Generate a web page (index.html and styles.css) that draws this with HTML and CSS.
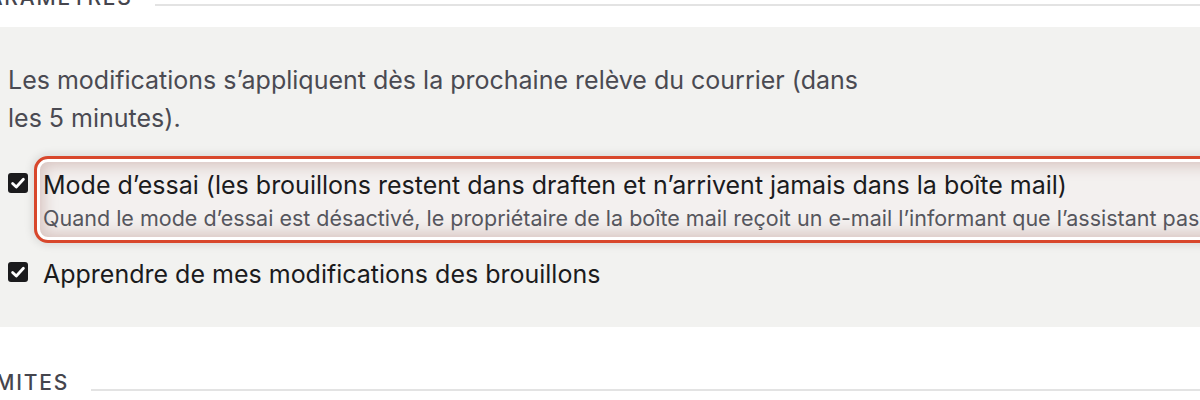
FILE: index.html
```html
<!DOCTYPE html>
<html lang="fr">
<head>
<meta charset="utf-8">
<title>Paramètres</title>
<link rel="stylesheet" href="styles.css">
</head>
<body>
<div class="page">
  <div class="section-head head-top">
    <h2>Paramètres</h2>
    <span class="rule"></span>
  </div>
  <div class="panel">
    <p class="intro">Les modifications s’appliquent dès la prochaine relève du courrier (dans les 5 minutes).</p>
    <div class="option">
      <span class="check"><svg viewBox="0 0 20 20" width="20" height="20"><rect x="0" y="0" width="20" height="20" rx="3" fill="#1b1b1d"/><path d="M4.6 10.4 L8.3 14 L15.4 6.2" fill="none" stroke="#fff" stroke-width="2.8" stroke-linecap="round" stroke-linejoin="round"/></svg></span>
      <div class="opt-text highlight">
        <div class="opt-label">Mode d’essai (les brouillons restent dans draften et n’arrivent jamais dans la boîte mail)</div>
        <div class="opt-desc">Quand le mode d’essai est désactivé, le propriétaire de la boîte mail reçoit un e-mail l’informant que l’assistant passe en mode actif.</div>
      </div>
    </div>
    <div class="option">
      <span class="check"><svg viewBox="0 0 20 20" width="20" height="20"><rect x="0" y="0" width="20" height="20" rx="3" fill="#1b1b1d"/><path d="M4.6 10.4 L8.3 14 L15.4 6.2" fill="none" stroke="#fff" stroke-width="2.8" stroke-linecap="round" stroke-linejoin="round"/></svg></span>
      <div class="opt-text">
        <div class="opt-label">Apprendre de mes modifications des brouillons</div>
      </div>
    </div>
  </div>
  <div class="section-head head-bottom">
    <h2>Limites</h2>
    <span class="rule"></span>
  </div>
</div>
</body>
</html>
```
FILE: styles.css
```css
html, body {
  margin: 0;
  padding: 0;
  background: #ffffff;
  overflow: hidden;
}
body {
  font-family: "Inter", "Noto Sans", sans-serif;
  color: #1b1b1d;
  width: 1200px;
  height: 400px;
}
.page {
  width: 1200px;
}
.section-head {
  display: flex;
  align-items: flex-end;
  gap: 22px;
  margin-left: -26px;
}
.section-head h2 {
  margin: 0;
  font-size: 21px;
  font-weight: 500;
  text-transform: uppercase;
  letter-spacing: 1.8px;
  color: #45454d;
  line-height: 26px;
  white-space: nowrap;
}
.section-head .rule {
  flex: 1;
  height: 2px;
  background: #e3e3e3;
  margin-bottom: 5px;
}
.head-top {
  margin-top: -15px;
}
.head-bottom {
  margin-top: 43px;
}
.panel {
  background: #f2f2f0;
  margin-top: 16px;
  padding: 34px 8px 36px 8px;
  overflow: hidden;
}
.intro {
  margin: 0 0 31px 0;
  max-width: 865px;
  font-size: 25px;
  line-height: 38px;
  color: #4a4a52;
}
.option {
  display: flex;
  align-items: flex-start;
  gap: 15px;
}
.option + .option {
  margin-top: 23px;
}
.check {
  flex: none;
  width: 20px;
  height: 20px;
  margin-top: 5px;
  display: block;
}
.check svg {
  display: block;
}
.opt-text {
  white-space: nowrap;
}
.opt-label {
  font-size: 25px;
  line-height: 34px;
  color: #1b1b1d;
}
.opt-desc {
  font-size: 21.5px;
  line-height: 32px;
  color: #56565d;
}
.highlight {
  margin: -12px 0 -9px -9px;
  padding: 9px 0 6px 6px;
  width: 1240px;
  flex: none;
  border: 3px solid #d8472c;
  border-radius: 14px;
  box-shadow:
    inset 0 0 0 3px #ffffff,
    inset 0 0 14px 7px rgba(170, 120, 112, 0.36),
    0 0 8px 2px rgba(0, 0, 0, 0.10);
  background: #f3f0ef;
}
```
